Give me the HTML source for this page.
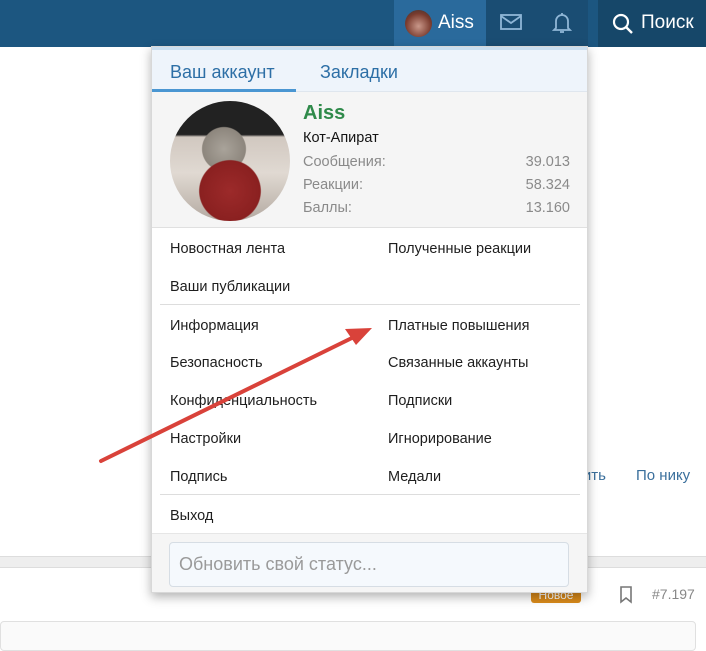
<!DOCTYPE html>
<html><head><meta charset="utf-8"><style>
*{box-sizing:border-box;margin:0;padding:0}
body{width:706px;height:647px;overflow:hidden;background:#fff;font-family:"Liberation Sans","DejaVu Sans",sans-serif;position:relative;color:#141414}
.hdr{position:absolute;left:0;top:0;width:706px;height:47px;background:#1c5680}
.abs{position:absolute}
.menu{position:absolute;left:151px;top:46px;width:437px;height:547px;background:#fff;box-shadow:0 4px 10px rgba(0,0,0,.3);border:1px solid #d8d8d8}
.it{position:absolute;font-size:14.5px;color:#1e1e1e}
.g{color:#8a8a8a;font-size:14.5px;position:absolute}
</style></head><body>
<div class="hdr"></div>
<div class="abs" style="left:394px;top:0;width:92px;height:47px;background:#2a6a9c"></div>
<div class="abs" style="left:486px;top:0;width:102px;height:47px;background:#1a4d73"></div>
<div class="abs" style="left:598px;top:0;width:108px;height:47px;background:#164769"></div>
<div class="abs" style="left:405px;top:10px;width:27px;height:27px;border-radius:50%;background:radial-gradient(circle at 50% 60%,#c9988a,#7a3b2e 60%,#333)"></div>
<div class="abs" style="left:438px;top:12px;color:#fff;font-size:19px">Aiss</div>
<svg class="abs" style="left:500px;top:13px" width="22" height="18" viewBox="0 0 22 18"><rect x="1" y="2" width="20" height="14" fill="none" stroke="#8fb6d6" stroke-width="1.8"/><path d="M1 3l10 7 10-7" fill="none" stroke="#8fb6d6" stroke-width="1.8"/></svg>
<svg class="abs" style="left:552px;top:11px" width="20" height="24" viewBox="0 0 20 24"><path d="M4 17V10a6 6 0 0112 0v7l2 2H2z" fill="none" stroke="#8fb6d6" stroke-width="1.8"/><path d="M8 21h4" stroke="#8fb6d6" stroke-width="1.8"/><path d="M10 2v2" stroke="#8fb6d6" stroke-width="1.8"/></svg>
<svg class="abs" style="left:612px;top:13px" width="22" height="22" viewBox="0 0 22 22"><circle cx="9" cy="9" r="7" fill="none" stroke="#fff" stroke-width="2.2"/><path d="M14 14l6 6" stroke="#fff" stroke-width="2.4"/></svg>
<div class="abs" style="left:641px;top:12px;color:#fff;font-size:19px">Поиск</div>
<div class="abs" style="left:0;top:556px;width:706px;height:12px;background:#eee;border-top:1px solid #ddd;border-bottom:1px solid #ddd"></div>
<div class="abs" style="left:576px;top:467px;color:#3a6f9c;font-size:15px">тить</div>
<div class="abs" style="left:636px;top:467px;color:#3a6f9c;font-size:15px">По нику</div>
<div class="abs" style="left:531px;top:587px;width:50px;height:16px;background:#d98a1a;border-radius:3px;color:#fff;font-size:12px;text-align:center;line-height:16px">Новое</div>
<svg class="abs" style="left:619px;top:586px" width="14" height="18" viewBox="0 0 14 18"><path d="M2 1h10v15l-5-4-5 4z" fill="none" stroke="#777" stroke-width="1.6"/></svg>
<div class="abs" style="left:652px;top:586px;color:#888;font-size:14px">#7.197</div>
<div class="abs" style="left:0;top:621px;width:696px;height:30px;border:1px solid #e0e0e0;border-radius:4px;background:#fafafa"></div>
<div class="menu">
 <div class="abs" style="left:0;top:0;width:435px;height:45px;background:#eef4fb;border-bottom:1px solid #dfe6ee"></div>
 <div class="abs" style="left:0;top:0;width:435px;height:3px;background:#c9def0"></div>
 <div class="abs" style="left:18px;top:15px;color:#2d6fa6;font-size:18px">Ваш аккаунт</div>
 <div class="abs" style="left:0;top:42px;width:144px;height:3px;background:#4a96d2"></div>
 <div class="abs" style="left:168px;top:15px;color:#2d6fa6;font-size:18px">Закладки</div>
 <div class="abs" style="left:0;top:45px;width:435px;height:136px;background:#f5f5f5;border-bottom:1px solid #e0e0e0"></div>
 <div class="abs" style="left:18px;top:54px;width:120px;height:120px;border-radius:50%;background:radial-gradient(circle at 50% 75%,#9c2a2a 0,#8a2020 28%,transparent 29%),radial-gradient(circle at 45% 40%,#a9a39a 0,#8d867d 22%,transparent 23%),linear-gradient(180deg,#222 0,#222 28%,#d1c8c0 30%,#e0d9d2 60%,#b4aaa2 100%)"></div>
 <div class="abs" style="left:151px;top:55px;color:#2f8a4a;font-size:20px;font-weight:bold">Aiss</div>
 <div class="abs" style="left:151px;top:83px;font-size:14.5px">Кот-Апират</div>
 <div class="g" style="left:151px;top:107px">Сообщения:</div><div class="g" style="right:17px;top:107px">39.013</div>
 <div class="g" style="left:151px;top:130px">Реакции:</div><div class="g" style="right:17px;top:130px">58.324</div>
 <div class="g" style="left:151px;top:153px">Баллы:</div><div class="g" style="right:17px;top:153px">13.160</div>
 <div class="it" style="left:18px;top:194px">Новостная лента</div><div class="it" style="left:236px;top:194px">Полученные реакции</div>
 <div class="it" style="left:18px;top:232px">Ваши публикации</div>
 <div class="abs" style="left:8px;top:257px;width:420px;height:1px;background:#ddd"></div>
 <div class="it" style="left:18px;top:271px">Информация</div><div class="it" style="left:236px;top:271px">Платные повышения</div>
 <div class="it" style="left:18px;top:308px">Безопасность</div><div class="it" style="left:236px;top:308px">Связанные аккаунты</div>
 <div class="it" style="left:18px;top:346px">Конфиденциальность</div><div class="it" style="left:236px;top:346px">Подписки</div>
 <div class="it" style="left:18px;top:384px">Настройки</div><div class="it" style="left:236px;top:384px">Игнорирование</div>
 <div class="it" style="left:18px;top:422px">Подпись</div><div class="it" style="left:236px;top:422px">Медали</div>
 <div class="abs" style="left:8px;top:447px;width:420px;height:1px;background:#ddd"></div>
 <div class="it" style="left:18px;top:461px">Выход</div>
 <div class="abs" style="left:0;top:486px;width:435px;height:59px;background:#f5f5f5;border-top:1px solid #e6e6e6"></div>
 <div class="abs" style="left:17px;top:495px;width:400px;height:45px;background:#f5f9fd;border:1px solid #d6dde4;border-radius:4px;color:#9a9a9a;font-size:18px;padding:11px 9px">Обновить свой статус...</div>
</div>
<svg class="abs" style="left:0;top:0" width="706" height="647"><path d="M101 461L358 335" stroke="#d9423a" stroke-width="4" stroke-linecap="round"/><path d="M372 328L345 329L356 345Z" fill="#d9423a"/></svg>
</body></html>
